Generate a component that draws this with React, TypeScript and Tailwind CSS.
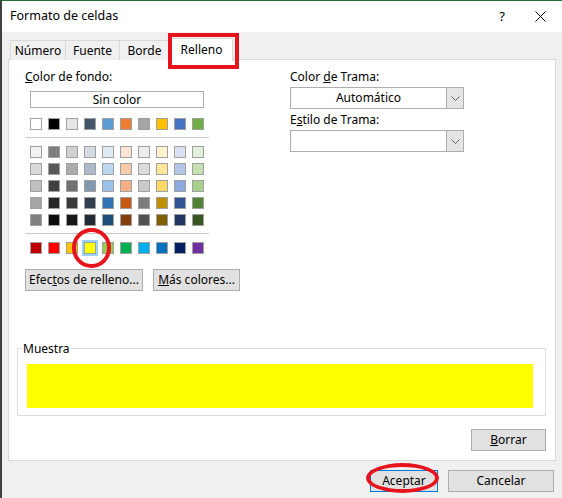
import React from "react";

const top = ["#ffffff","#000000","#e7e6e6","#44546a","#5b9bd5","#ed7d31","#a5a5a5","#ffc000","#4472c4","#70ad47"];
const theme = [
["#f2f2f2","#7f7f7f","#d0cece","#d6dce4","#ddebf7","#fce4d6","#ededed","#fff2cc","#d9e1f2","#e2efda"],
["#d9d9d9","#595959","#aeaaaa","#acb9ca","#bdd7ee","#f8cbad","#dbdbdb","#ffe699","#b4c6e7","#c6e0b4"],
["#bfbfbf","#404040","#757171","#8497b0","#9bc2e6","#f4b084","#c9c9c9","#ffd966","#8ea9db","#a9d08e"],
["#a6a6a6","#262626","#3a3838","#333f4f","#2f75b5","#c65911","#7b7b7b","#bf8f00","#305496","#548235"],
["#808080","#0d0d0d","#161616","#222b35","#1f4e78","#833c0c","#525252","#806000","#203764","#375623"],
];
const std = ["#c00000","#ff0000","#ffc000","#ffff00","#92d050","#00b050","#00b0f0","#0070c0","#002060","#7030a0"];

function Row({ colors, sel }: { colors: string[]; sel?: number }) {
  return (
    <div className="flex gap-[6px] h-[12px] items-center">
      {colors.map((c, i) => (
        <div key={i} className={"w-[12px] h-[12px] shrink-0 " + (i === sel ? "outline outline-2 outline-[#99d1ff]" : "")}>
          <div className="w-full h-full border border-[#a0a0a0]" style={{ background: c }} />
        </div>
      ))}
    </div>
  );
}

function Chevron() {
  return (
    <div className="w-[17px] h-full bg-[#e5e5e5] border-l border-[#adadad] flex items-center justify-center">
      <svg width="9" height="5" viewBox="0 0 9 5"><path d="M0.5 0.5 L4.5 4.5 L8.5 0.5" stroke="#606060" fill="none" /></svg>
    </div>
  );
}

export default function App() {
  return (
    <div className="w-[562px] h-[498px] bg-[#f0f0f0] relative text-[12px] text-black overflow-hidden border-l-2 border-[#404040] border-t border-t-[#1e6b3a]" style={{ fontFamily: '"Noto Sans", "Open Sans", sans-serif' }}>
      <div className="h-[31px] bg-white flex items-center pl-[8px] pr-[12px]">
        <span className="text-[12.5px]">Formato de celdas</span>
        <span className="ml-auto mr-[30px] text-[13px]">?</span>
        <svg width="11" height="11" viewBox="0 0 11 11" className="mr-[4px]"><path d="M0.5 0.5 L10.5 10.5 M10.5 0.5 L0.5 10.5" stroke="#000" /></svg>
      </div>
      <div className="flex pl-[8px] pt-[6px] h-[28px] relative z-10">
        <div className="w-[56px] text-center border border-[#d9d9d9] border-b-0 bg-[#f0f0f0] leading-[20px] mt-[2px]">Número</div>
        <div className="w-[54px] text-center border-t border-r border-[#d9d9d9] bg-[#f0f0f0] leading-[20px] mt-[2px]">Fuente</div>
        <div className="w-[50px] text-center border-t border-r border-[#d9d9d9] bg-[#f0f0f0] leading-[20px] mt-[2px]">Borde</div>
        <div className="w-[63px] text-center bg-white border border-[#d9d9d9] border-b-0 leading-[22px] h-[23px]">Relleno</div>
      </div>
      <div className="mx-[6px] h-[402px] -mt-[1px] bg-white border border-[#d9d9d9] flex flex-col px-[8px]">
        <div className="flex pt-[9px]">
          <div className="w-[190px] pl-[8px] flex flex-col">
            <div className="leading-[16px]"><u>C</u>olor de fondo:</div>
            <div className="mt-[6px] ml-[5px] w-[174px] h-[17px] border border-[#adadad] flex items-center justify-center">Sin color</div>
            <div className="mt-[10px] ml-[5px]"><Row colors={top} /></div>
            <div className="mt-[7px] w-[184px] h-px bg-[#c8c8c8]" />
            <div className="mt-[8px] ml-[5px] flex flex-col gap-[5px]">
              {theme.map((r, i) => <Row key={i} colors={r} />)}
            </div>
            <div className="mt-[7px] w-[184px] h-px bg-[#c8c8c8]" />
            <div className="mt-[8px] ml-[5px]"><Row colors={std} sel={3} /></div>
          </div>
          <div className="ml-[83px] flex flex-col w-[174px]">
            <div className="leading-[16px]">Color <u>d</u>e Trama:</div>
            <div className="mt-[2px] h-[22px] border border-[#adadad] flex">
              <div className="flex-1 flex items-center justify-center">Automático</div>
              <Chevron />
            </div>
            <div className="mt-[3px] leading-[16px]">E<u>s</u>tilo de Trama:</div>
            <div className="mt-[2px] h-[22px] border border-[#adadad] flex">
              <div className="flex-1" />
              <Chevron />
            </div>
          </div>
        </div>
        <div className="flex gap-[10px] mt-[15px] pl-[8px]">
          <div className="h-[22px] w-[118px] border border-[#adadad] bg-[#e1e1e1] flex items-center justify-center">Efec<u>t</u>os de relleno...</div>
          <div className="h-[22px] w-[87px] border border-[#adadad] bg-[#e1e1e1] flex items-center justify-center"><u>M</u>ás colores...</div>
        </div>
        <div className="mt-[57px] relative h-[68px] border border-[#dcdcdc] mr-[1px]">
          <span className="absolute -top-[7px] left-[4px] bg-white px-px leading-[14px]">Muestra</span>
          <div className="mt-[15px] ml-[9px] mr-[12px] h-[44px] bg-[#ffff00]" />
        </div>
        <div className="flex justify-end mt-[13px] mr-[1px]">
          <div className="h-[22px] w-[75px] border border-[#adadad] bg-[#e1e1e1] flex items-center justify-center"><u>B</u>orrar</div>
        </div>
      </div>
      <div className="flex justify-end gap-[10px] mt-[9px] mr-[8px]">
        <div className="h-[22px] w-[68px] border border-[#0078d7] bg-[#e1e1e1] flex items-center justify-center">Aceptar</div>
        <div className="h-[22px] w-[106px] border border-[#adadad] bg-[#e1e1e1] flex items-center justify-center">Cancelar</div>
      </div>
      <div className="absolute left-[166px] top-[32px] w-[71px] h-[36px] border-[4px] border-[#e8141c] z-20" />
      <div className="absolute left-[70px] top-[227px] w-[39px] h-[40px] rounded-full border-[4px] border-[#e8141c]" />
      <div className="absolute left-[364px] top-[462px] w-[73px] h-[30px] rounded-[50%] border-[4px] border-[#e8141c]" />
    </div>
  );
}
